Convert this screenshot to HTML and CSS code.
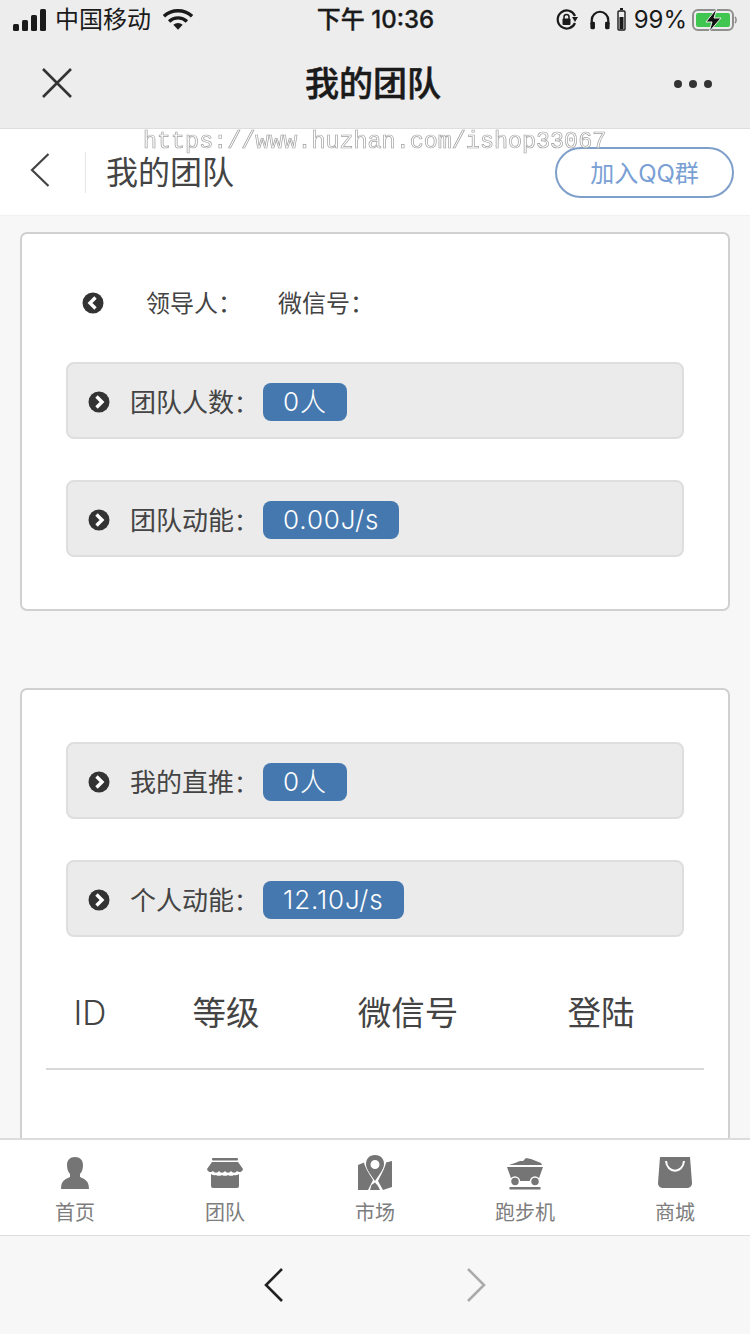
FILE: index.html
```html
<!DOCTYPE html>
<html lang="zh-CN">
<head>
  <meta charset="UTF-8" />
  <title>我的团队</title>
  <link rel="stylesheet" href="styles.css">
</head>
<body>
  <div class="phone">
    <!-- 状态栏 -->
    <div class="statusbar">
      <div class="status-left">
        <svg class="signal" width="34" height="22" viewBox="0 0 34 22">
          <rect x="0" y="15" width="6" height="7" rx="1.5"/>
          <rect x="9" y="11" width="6" height="11" rx="1.5"/>
          <rect x="18" y="6" width="6" height="16" rx="1.5"/>
          <rect x="27" y="0" width="6" height="22" rx="1.5"/>
        </svg>
        <span class="carrier">中国移动</span>
        <svg class="wifi" width="30" height="22" viewBox="0 0 32 22">
          <path d="M1 7 A22 22 0 0 1 31 7" fill="none" stroke="#1a1a1a" stroke-width="3.6"/>
          <path d="M6.5 12.5 A14 14 0 0 1 25.5 12.5" fill="none" stroke="#1a1a1a" stroke-width="3.6"/>
          <path d="M11 16 A7.5 7.5 0 0 1 21 16 L16 21.5 Z" fill="#1a1a1a"/>
        </svg>
      </div>
      <div class="status-time">下午 10:36</div>
      <div class="status-right">
        <svg width="24" height="24" viewBox="0 0 24 24">
          <path d="M20 15 A9 9 0 1 1 20 8" fill="none" stroke="#1a1a1a" stroke-width="2.2"/>
          <path d="M17 9 L23 9 L20 14 Z" fill="#1a1a1a"/>
          <rect x="7.5" y="10.5" width="8" height="6.5" rx="1" fill="#1a1a1a"/>
          <path d="M9 11 V9 A2.5 2.5 0 0 1 14 9 V11" fill="none" stroke="#1a1a1a" stroke-width="1.5"/>
        </svg>
        <svg class="phones" width="22" height="22" viewBox="0 0 24 24">
          <path d="M3 17 V12 A9 9 0 0 1 21 12 V17" fill="none" stroke="#1a1a1a" stroke-width="2.4"/>
          <rect x="1.5" y="14" width="5" height="8" rx="1.5" fill="#1a1a1a"/>
          <rect x="17.5" y="14" width="5" height="8" rx="1.5" fill="#1a1a1a"/>
        </svg>
        <svg class="mini-batt" width="9" height="24" viewBox="0 0 9 24">
          <rect x="3" y="0" width="3" height="2" fill="#1a1a1a"/>
          <rect x="1" y="3" width="7" height="19" rx="1" fill="none" stroke="#1a1a1a" stroke-width="1.4"/>
          <rect x="2.5" y="9" width="4" height="12" fill="#1a1a1a"/>
        </svg>
        <span class="percent">99%</span>
        <svg class="battery" width="46" height="24" viewBox="0 0 46 24">
          <rect x="1" y="2" width="40" height="20" rx="5" fill="none" stroke="#8f8f8f" stroke-width="2"/>
          <rect x="4" y="5" width="34" height="14" rx="2" fill="#3fc651"/>
          <path d="M42.800 9 C44.500 10 44.500 14 42.800 15" fill="none" stroke="#8f8f8f" stroke-width="1.600"/>
          <path d="M25 0 L14 14 L20 14 L17 24 L29 10 L22 10 Z" fill="#111" stroke="#ededed" stroke-width="1"/>
        </svg>
      </div>
    </div>

    <!-- 微信导航 -->
    <div class="wxnav">
      <svg class="wx-close" width="30" height="30" viewBox="0 0 30 30">
        <path d="M1 1 L29 29 M29 1 L1 29" stroke="#333" stroke-width="2.600" fill="none"/>
      </svg>
      <div class="wx-title">我的团队</div>
      <div class="wx-more"><i></i><i></i><i></i></div>
    </div>

    <!-- 页面头 -->
    <div class="header">
      <svg class="back" width="20" height="34" viewBox="0 0 20 34">
        <path d="M18.500 1 L2 17 L18.500 33" fill="none" stroke="#444" stroke-width="2.200"/>
      </svg>
      <div class="header-line"></div>
      <div class="header-title">我的团队</div>
      <a class="qq-btn" href="#">加入QQ群</a>
    </div>

    <div class="content">
      <!-- 团队 -->
      <div class="card card-team">
        <div class="leader">
          <svg class="dot" width="22" height="22" viewBox="0 0 22 22">
            <circle cx="11" cy="11" r="10.500" fill="#333"/>
            <path d="M13.500 5.500 L8 11 L13.500 16.500" fill="none" stroke="#fff" stroke-width="3.400"/>
          </svg>
          <span class="leader-name">领导人<i class="colon">：</i></span>
          <span class="leader-wx">微信号<i class="colon">：</i></span>
        </div>
        <div class="stat">
          <svg class="dot" width="22" height="22" viewBox="0 0 22 22">
            <circle cx="11" cy="11" r="10.500" fill="#333"/>
            <path d="M8.500 5.500 L14 11 L8.500 16.500" fill="none" stroke="#fff" stroke-width="3.400"/>
          </svg>
          <span class="stat-label">团队人数<i class="colon">：</i></span>
          <span class="badge">0人</span>
        </div>
        <div class="stat">
          <svg class="dot" width="22" height="22" viewBox="0 0 22 22">
            <circle cx="11" cy="11" r="10.500" fill="#333"/>
            <path d="M8.500 5.500 L14 11 L8.500 16.500" fill="none" stroke="#fff" stroke-width="3.400"/>
          </svg>
          <span class="stat-label">团队动能<i class="colon">：</i></span>
          <span class="badge">0.00J/s</span>
        </div>
      </div>

      <!-- 个人 -->
      <div class="card card-mine">
        <div class="stat">
          <svg class="dot" width="22" height="22" viewBox="0 0 22 22">
            <circle cx="11" cy="11" r="10.500" fill="#333"/>
            <path d="M8.500 5.500 L14 11 L8.500 16.500" fill="none" stroke="#fff" stroke-width="3.400"/>
          </svg>
          <span class="stat-label">我的直推<i class="colon">：</i></span>
          <span class="badge">0人</span>
        </div>
        <div class="stat">
          <svg class="dot" width="22" height="22" viewBox="0 0 22 22">
            <circle cx="11" cy="11" r="10.500" fill="#333"/>
            <path d="M8.500 5.500 L14 11 L8.500 16.500" fill="none" stroke="#fff" stroke-width="3.400"/>
          </svg>
          <span class="stat-label">个人动能<i class="colon">：</i></span>
          <span class="badge">12.10J/s</span>
        </div>
        <div class="thead">
          <span class="th-id">ID</span>
          <span>等级</span>
          <span>微信号</span>
          <span>登陆</span>
        </div>
      </div>
    </div>

    <!-- 底部菜单 -->
    <div class="tabbar">
      <a class="tab" href="#">
        <svg width="36" height="34" viewBox="0 0 36 34">
          <path d="M18 1 C23 1 26 4 26 9 C26 13 25 16 23 18 L23 21 C27 23 32 24 32 33 L4 33 C4 24 9 23 13 21 L13 18 C11 16 10 13 10 9 C10 4 13 1 18 1 Z"/>
        </svg>
        <span>首页</span>
      </a>
      <a class="tab" href="#">
        <svg width="36" height="34" viewBox="0 0 36 34">
          <rect x="5" y="2" width="26" height="2.500" rx="1"/>
          <path d="M5 6 L31 6 L36 13 A3.500 3.500 0 0 1 30 15 A3.500 3.500 0 0 1 24 15 A3.500 3.500 0 0 1 18 15 A3.500 3.500 0 0 1 12 15 A3.500 3.500 0 0 1 6 15 A3.500 3.500 0 0 1 0 13 Z"/>
          <path d="M4 18 A6 6 0 0 0 9 19 A6 6 0 0 0 15 19 A6 6 0 0 0 21 19 A6 6 0 0 0 27 19 A6 6 0 0 0 32 18 L32 30 A2 2 0 0 1 30 32 L6 32 A2 2 0 0 1 4 30 Z"/>
        </svg>
        <span>团队</span>
      </a>
      <a class="tab" href="#">
        <svg width="36" height="36" viewBox="0 0 36 36">
          <path fill-rule="evenodd" d="M18 0 C24 0 27 4 27 9 C27 14 22 20 18 26 C14 20 9 14 9 9 C9 4 12 0 18 0 Z M18 5 A4.500 4.500 0 1 0 18 14 A4.500 4.500 0 0 0 18 5 Z"/>
          <path d="M1 10 L7 7.500 C8 13 13 20 16 25 L11 35 L1 35 Z"/>
          <path d="M29 7.500 L35 6 L35 32 L26 35 L21 26 C24 20 28 13 29 7.500 Z"/>
          <path d="M14.500 30 L18 27.500 L21 31 L23 35 L13 35 Z"/>
        </svg>
        <span>市场</span>
      </a>
      <a class="tab" href="#">
        <svg width="36" height="34" viewBox="0 0 36 34">
          <path d="M2 9 L8 7 L13 5 L16 5 L19 2 L24 3 L29 5 L34 7 L35 9 Z"/>
          <path d="M0 11 L36 11 L31 25 L5 25 Z"/>
          <circle cx="8" cy="25.500" r="4.500" stroke="#fff" stroke-width="1.500"/>
          <circle cx="28" cy="25.500" r="4.500" stroke="#fff" stroke-width="1.500"/>
          <rect x="2.500" y="31" width="31" height="2.500"/>
        </svg>
        <span>跑步机</span>
      </a>
      <a class="tab" href="#">
        <svg width="36" height="34" viewBox="0 0 36 34">
          <path d="M3 1 L33 1 L35 27 A5 5 0 0 1 31 32 L5 32 A5 5 0 0 1 1 27 Z"/>
          <path d="M9 5 C10 18 26 18 27 5" fill="none" stroke="#fff" stroke-width="2"/>
        </svg>
        <span>商城</span>
      </a>
    </div>

    <!-- 微信底栏 -->
    <div class="wxbottom">
      <svg width="20" height="34" viewBox="0 0 20 34">
        <path d="M18 1 L2 17 L18 33" fill="none" stroke="#222" stroke-width="2.600"/>
      </svg>
      <svg width="20" height="34" viewBox="0 0 20 34">
        <path d="M2 1 L18 17 L2 33" fill="none" stroke="#ababab" stroke-width="2.600"/>
      </svg>
    </div>

    <div class="watermark">https://www.huzhan.com/ishop33067</div>
  </div>
</body>
</html>
```

FILE: styles.css
```css
* {
  box-sizing: border-box;
}
body {
  margin: 0;
  padding: 0;
  background: #f7f7f7;
  font-family: Inter, "Noto Sans CJK SC", sans-serif;
  color: #333;
}
a {
  text-decoration: none;
}
.phone {
  position: relative;
  display: flex;
  flex-direction: column;
  width: 750px;
  height: 1334px;
  overflow: hidden;
}

/* status bar */
.statusbar {
  display: flex;
  align-items: center;
  justify-content: space-between;
  height: 40px;
  padding: 0 12px 0 13px;
  background: #ededed;
  color: #1a1a1a;
}
.status-left {
  display: flex;
  align-items: center;
  width: 230px;
}
.signal {
  fill: #1a1a1a;
}
.carrier {
  margin-left: 8px;
  font-size: 24px;
  line-height: 40px;
}
.wifi {
  margin-left: 12px;
}
.status-time {
  font-size: 24px;
  font-weight: 500;
  line-height: 40px;
  -webkit-text-stroke: 0.3px #1a1a1a;
}
.status-right {
  display: flex;
  align-items: center;
  justify-content: flex-end;
  width: 230px;
}
.phones {
  margin-left: 10px;
}
.mini-batt {
  margin-left: 6px;
}
.percent {
  margin-left: 8px;
  font-size: 24px;
  line-height: 40px;
}
.battery {
  margin-left: 5px;
}

/* wechat nav */
.wxnav {
  display: flex;
  align-items: center;
  justify-content: space-between;
  height: 89px;
  padding: 0 38px 0 42px;
  background: #ededed;
  border-bottom: 1px solid #dedede;
}
.wx-close {
  margin-bottom: 2px;
}
.wx-title {
  font-size: 34px;
  font-weight: 500;
  line-height: 88px;
  color: #1a1a1a;
  -webkit-text-stroke: 0.5px #1a1a1a;
}
.wx-more {
  display: flex;
  gap: 7px;
  margin-bottom: 1px;
}
.wx-more i {
  width: 8px;
  height: 8px;
  border-radius: 50%;
  background: #333;
}

/* page header */
.header {
  display: flex;
  align-items: center;
  height: 87px;
  padding: 0 16px 0 30px;
  background: #fff;
  border-bottom: 1px solid #f1f1f1;
}
.back {
  margin-bottom: 4px;
}
.header-line {
  width: 1px;
  height: 41px;
  margin-left: 35px;
  background: #e6e6e6;
}
.header-title {
  margin-left: 20px;
  margin-bottom: 5px;
  font-size: 32px;
  color: #444;
}
.qq-btn {
  display: block;
  margin-left: auto;
  width: 179px;
  height: 51px;
  border: 2px solid #7e9fc9;
  border-radius: 26px;
  font-size: 24px;
  line-height: 50px;
  text-align: center;
  color: #7a9fd4;
}

/* content */
.content {
  flex: 1;
  min-height: 0;
  overflow: hidden;
  padding: 16px 20px 0;
}
.card {
  padding: 0 24px;
  background: #fff;
  border: 2px solid #d0d0d0;
  border-radius: 7px;
}
.card-team {
  height: 379px;
  padding-top: 48px;
  margin-bottom: 77px;
}
.card-mine {
  padding-top: 52px;
  height: 600px;
}
.colon {
  font-family: "Noto Sans CJK TC", sans-serif;
  font-size: 24px;
  font-style: normal;
}
.dot {
  flex-shrink: 0;
  margin-top: 2px;
}
.leader {
  display: flex;
  align-items: center;
  height: 40px;
  margin-left: 36px;
  margin-bottom: 40px;
  font-size: 24px;
  color: #444;
}
.leader-name,
.leader-wx {
  padding-bottom: 2px;
}
.leader-name {
  margin-left: 42px;
}
.leader-wx {
  margin-left: 36px;
}
.stat {
  display: flex;
  align-items: center;
  height: 77px;
  margin: 0 20px 41px;
  padding-left: 20px;
  background: #ebebeb;
  border: 2px solid #dedede;
  border-radius: 8px;
  font-size: 26px;
  color: #444;
}
.stat-label {
  margin-left: 20px;
  width: 133px;
}
.badge {
  height: 38px;
  margin-top: 3px;
  padding: 0 20px;
  border-radius: 8px;
  background: #4578ae;
  color: #fff;
  font-size: 26px;
  font-weight: 300;
  letter-spacing: 0.9px;
  line-height: 37px;
}
.thead {
  display: grid;
  grid-template-columns: 88px 184px 180px 206px;
  align-items: center;
  height: 96px;
  margin-top: -4px;
  border-bottom: 2px solid #d8d8d8;
  font-size: 33.500px;
  text-align: center;
  color: #444;
}
.thead span {
  padding-bottom: 22px;
}
.thead .th-id {
  padding-bottom: 16px;
  font-weight: 300;
}

/* tab bar */
.tabbar {
  display: flex;
  height: 98px;
  background: #fff;
  border-top: 2px solid #dcdcdc;
  border-bottom: 1px solid #dedede;
}
.tab {
  display: flex;
  flex-direction: column;
  align-items: center;
  flex: 1;
  height: 95px;
  padding-top: 15px;
  font-size: 20px;
  color: #7d7d7d;
}
.tab svg {
  height: 36px;
  fill: #757575;
}
.tab span {
  margin-top: 7px;
  line-height: 30px;
}

/* wechat bottom */
.wxbottom {
  display: flex;
  align-items: center;
  justify-content: center;
  gap: 182px;
  height: 98px;
  background: #f7f7f7;
}

.watermark {
  position: absolute;
  left: 143px;
  top: 127px;
  font-family: "Liberation Mono", monospace;
  font-size: 23.400px;
  line-height: 30px;
  white-space: nowrap;
  color: rgba(255, 255, 255, 0.7);
  filter: grayscale(1);
  -webkit-text-stroke: 0.7px #a0a0a0;
}
```
